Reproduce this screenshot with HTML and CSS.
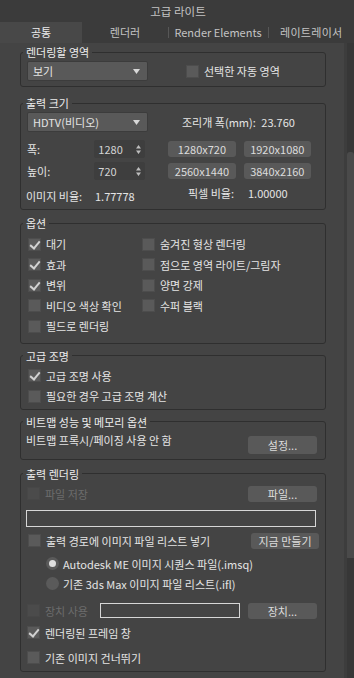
FILE: index.html
```html
<!DOCTYPE html>
<html>
<head>
    <meta charset="utf-8">
    <title>고급 라이트</title>
    <link rel="stylesheet" href="styles.css">
</head>
<body>
    <div class="titlebar">고급 라이트</div>

    <div class="tabs">
        <div class="tab tab-common active">공통</div>
        <div class="tab tab-renderer">렌더러</div>
        <div class="tab tab-elements">Render Elements</div>
        <div class="tab tab-ray">레이트레이서</div>
    </div>

    <div class="main">
        <div class="panel">

            <fieldset class="group g-area">
                <legend>렌더링할 영역</legend>
                <div class="row">
                    <div class="dropdown"><span>보기</span><svg class="arrow" width="7" height="5" viewBox="0 0 7 5"><path d="M0 0H7L3.5 5Z" fill="#d8d8d8"/></svg></div>
                    <label class="check auto-area"><span class="box"></span>선택한 자동 영역</label>
                </div>
            </fieldset>

            <fieldset class="group g-size">
                <legend>출력 크기</legend>
                <div class="row">
                    <div class="dropdown"><span>HDTV(비디오)</span><svg class="arrow" width="7" height="5" viewBox="0 0 7 5"><path d="M0 0H7L3.5 5Z" fill="#d8d8d8"/></svg></div>
                    <div class="aperture">조리개 폭(mm): <span class="val">23.760</span></div>
                </div>
                <div class="row row-spin first">
                    <span class="spin-label">폭:</span>
                    <div class="spinner"><span>1280</span><svg width="5" height="9" viewBox="0 0 5 9"><path d="M0 3.5L2.5 0L5 3.5ZM0 5.5H5L2.5 9Z" fill="#bdbdbd"/></svg></div>
                    <button class="btn preset">1280x720</button>
                    <button class="btn preset">1920x1080</button>
                </div>
                <div class="row row-spin">
                    <span class="spin-label">높이:</span>
                    <div class="spinner"><span>720</span><svg width="5" height="9" viewBox="0 0 5 9"><path d="M0 3.5L2.5 0L5 3.5ZM0 5.5H5L2.5 9Z" fill="#bdbdbd"/></svg></div>
                    <button class="btn preset">2560x1440</button>
                    <button class="btn preset">3840x2160</button>
                </div>
                <div class="row row-ratio">
                    <span class="ratio-label">이미지 비율:</span><span class="ratio-val">1.77778</span>
                    <span class="pixel-label">픽셀 비율:</span><span class="pixel-val">1.00000</span>
                </div>
            </fieldset>

            <fieldset class="group g-options">
                <legend>옵션</legend>
                <div class="options">
                    <label class="check on"><span class="box"></span>대기</label>
                    <label class="check"><span class="box"></span>숨겨진 형상 렌더링</label>
                    <label class="check on"><span class="box"></span>효과</label>
                    <label class="check"><span class="box"></span>점으로 영역 라이트/그림자</label>
                    <label class="check on"><span class="box"></span>변위</label>
                    <label class="check"><span class="box"></span>양면 강제</label>
                    <label class="check"><span class="box"></span>비디오 색상 확인</label>
                    <label class="check"><span class="box"></span>수퍼 블랙</label>
                    <label class="check"><span class="box"></span>필드로 렌더링</label>
                </div>
            </fieldset>

            <fieldset class="group g-light">
                <legend>고급 조명</legend>
                <div class="list">
                    <label class="check on"><span class="box"></span>고급 조명 사용</label>
                    <label class="check"><span class="box"></span>필요한 경우 고급 조명 계산</label>
                </div>
            </fieldset>

            <fieldset class="group g-bitmap">
                <legend>비트맵 성능 및 메모리 옵션</legend>
                <div class="row row-bitmap">
                    <span>비트맵 프록시/페이징 사용 안 함</span>
                    <button class="btn btn-right tall">설정...</button>
                </div>
            </fieldset>

            <fieldset class="group g-output">
                <legend>출력 렌더링</legend>
                <div class="row line">
                    <label class="check disabled"><span class="box"></span>파일 저장</label>
                    <button class="btn btn-right">파일...</button>
                </div>
                <div class="field path"></div>
                <div class="row line list-row">
                    <label class="check"><span class="box"></span>출력 경로에 이미지 파일 리스트 넣기</label>
                    <button class="btn btn-make">지금 만들기</button>
                </div>
                <div class="row line radio-row first-radio">
                    <label class="radio on"><span class="dot"></span>Autodesk ME 이미지 시퀀스 파일(.imsq)</label>
                </div>
                <div class="row line radio-row">
                    <label class="radio"><span class="dot"></span>기존 3ds Max 이미지 파일 리스트(.ifl)</label>
                </div>
                <div class="row line device-row">
                    <label class="check disabled"><span class="box"></span>장치 사용</label>
                    <div class="field device"></div>
                    <button class="btn btn-device">장치...</button>
                </div>
                <div class="row line frame-row">
                    <label class="check on"><span class="box"></span>렌더링된 프레임 창</label>
                </div>
                <div class="row line skip-row">
                    <label class="check"><span class="box"></span>기존 이미지 건너뛰기</label>
                </div>
            </fieldset>

        </div>
        <div class="scrollbar"><div class="thumb"></div></div>
    </div>
</body>
</html>
```

FILE: styles.css
```css
* {
    box-sizing: border-box;
}

body {
    margin: 0;
    width: 354px;
    height: 678px;
    overflow: hidden;
    background-color: #444444;
    color: #e4e4e4;
    font-family: "Noto Sans CJK KR", "Noto Sans", sans-serif;
    font-size: 11px;
    line-height: 14px;
}

.titlebar {
    height: 22px;
    line-height: 22px;
    text-align: center;
    background-color: #3b3b3b;
    color: #c4c4c4;
    font-size: 11.5px;
    padding-left: 2px;
}

/* tabs */
.tabs {
    display: flex;
    height: 21px;
    background-color: #3b3b3b;
    overflow: hidden;
    white-space: nowrap;
}

.tab {
    height: 21px;
    line-height: 21px;
    color: #c4c4c4;
    text-align: center;
    position: relative;
}

.tab-common { width: 82px; }
.tab-renderer { width: 86px; }
.tab-elements { width: 100px; }
.tab-ray { width: 86px; text-align: left; padding-left: 12px; letter-spacing: 0.3px; }

.tab.active {
    background-color: #484848;
    color: #ececec;
}

/* short divider between inactive tabs */
.tab-elements::before,
.tab-ray::before {
    content: "";
    position: absolute;
    left: 0;
    top: 5px;
    height: 11px;
    border-left: 1px solid #575757;
}

/* main area */
.main {
    display: flex;
    height: 635px;
}

.panel {
    width: 344px;
    padding-top: 2px;
}

.scrollbar {
    width: 10px;
    background-color: #373737;
    border-left: 3px solid #3d3d3d;
}

.thumb {
    margin-top: 109px;
    height: 406px;
    background-color: #4a4a4a;
    border-radius: 3px 3px 0 0;
}

/* group boxes */
.group {
    margin: 0 0 0 20px;
    width: 306px;
    min-inline-size: 0;
    border: 1px solid #2f2f2f;
    border-radius: 3px;
    padding: 2px 6px 5px 6px;
}

.group legend {
    padding: 0 3px;
    margin-left: -4px;
    line-height: 14px;
    color: #ececec;
}

.g-size { margin-top: 9px; }
.g-options { margin-top: 6px; padding-top: 4px; padding-bottom: 6px; }
.g-light { margin-top: 5px; padding-top: 3px; padding-bottom: 2px; }
.g-bitmap { margin-top: 5px; padding-top: 4px; padding-bottom: 5px; }
.g-output { margin-top: 7px; padding-top: 5px; padding-bottom: 5px; }

.row {
    display: flex;
    align-items: center;
    white-space: nowrap;
}

/* dropdown */
.dropdown {
    width: 121px;
    height: 20px;
    background-color: #595959;
    border: 1px solid #3c3c3c;
    border-radius: 2px;
    display: flex;
    align-items: center;
    justify-content: space-between;
    padding: 0 7px 0 5px;
    color: #e4e4e4;
}

.aperture {
    margin-left: 34px;
}

.aperture .val {
    margin-left: 3px;
}

/* spinners + presets */
.row-spin {
    height: 18px;
    margin-top: 4px;
}

.row-spin.first {
    margin-top: 8px;
}

.spin-label {
    width: 69px;
}

.spinner {
    width: 52px;
    height: 18px;
    background-color: #3e3e3e;
    border-radius: 2px;
    display: flex;
    align-items: center;
    justify-content: space-between;
    padding: 0 4px 0 4px;
    color: #d4d4d4;
}

.btn {
    font-family: inherit;
    font-size: 11px;
    line-height: 14px;
    color: #dcdcdc;
    background-color: #595959;
    border: none;
    border-radius: 3px;
    height: 16px;
    width: 69px;
    padding: 0;
}

.preset {
    margin-right: 8px;
}

.preset:nth-of-type(1) {
    margin-left: 23px;
}

.row-ratio {
    height: 16px;
    margin-top: 8px;
}

.ratio-label { width: 69px; margin-left: -1px; }
.ratio-val { width: 93px; }
.pixel-label { width: 60px; position: relative; top: -3px; }
.pixel-val { position: relative; top: -3px; }

/* checkboxes */
.check {
    display: flex;
    align-items: center;
    white-space: nowrap;
}

.check .box {
    width: 13px;
    height: 13px;
    margin-right: 5px;
    background-color: #5a5a5a;
    border: 1px solid #4d4d4d;
    position: relative;
}

.check.on .box::after {
    content: "";
    position: absolute;
    left: 3px;
    top: 0px;
    width: 4px;
    height: 8px;
    border: solid #d2d2d2;
    border-width: 0 2px 2px 0;
    transform: rotate(40deg);
}

.check.disabled {
    color: #6c6c6c;
}

.check.disabled .box {
    background-color: #4b4b4b;
    border-color: #474747;
}

.auto-area {
    margin-left: 38px;
}

.options {
    display: grid;
    grid-template-columns: 114px auto;
    grid-auto-rows: 20.5px;
    align-items: center;
    padding-left: 1px;
}

.list {
    display: grid;
    grid-auto-rows: 20.5px;
    align-items: center;
    padding-left: 1px;
}

.row-bitmap {
    align-items: flex-start;
    height: 21px;
    margin-left: -1px;
}

.btn-right {
    margin-left: auto;
    margin-right: 2px;
}

.btn.tall {
    height: 18px;
    margin-top: 3px;
}

/* output rendering */
.line {
    height: 16px;
}

.field {
    border: 1px solid #d6d6d6;
    background-color: #444444;
}

.field.path {
    margin-top: 8px;
    width: 290px;
    height: 17px;
    margin-left: -1px;
}

.list-row {
    margin-top: 6px;
    padding-left: 1px;
}

.btn-make {
    margin-left: auto;
    width: 68px;
}

.radio-row {
    margin-top: 4px;
    padding-left: 19px;
}

.radio-row.first-radio {
    margin-top: 7px;
}

.radio {
    display: flex;
    align-items: center;
}

.radio .dot {
    width: 13px;
    height: 13px;
    border-radius: 50%;
    background-color: #5a5a5a;
    margin-right: 4px;
    position: relative;
}

.radio.on .dot::after {
    content: "";
    position: absolute;
    left: 3px;
    top: 3px;
    width: 7px;
    height: 7px;
    border-radius: 50%;
    background-color: #dedede;
}

.device-row {
    margin-top: 11px;
}

.field.device {
    width: 140px;
    height: 15px;
    margin-left: 12px;
}

.btn-device {
    margin-left: 8px;
}

.frame-row {
    margin-top: 6px;
}

.skip-row {
    margin-top: 9px;
}
```
